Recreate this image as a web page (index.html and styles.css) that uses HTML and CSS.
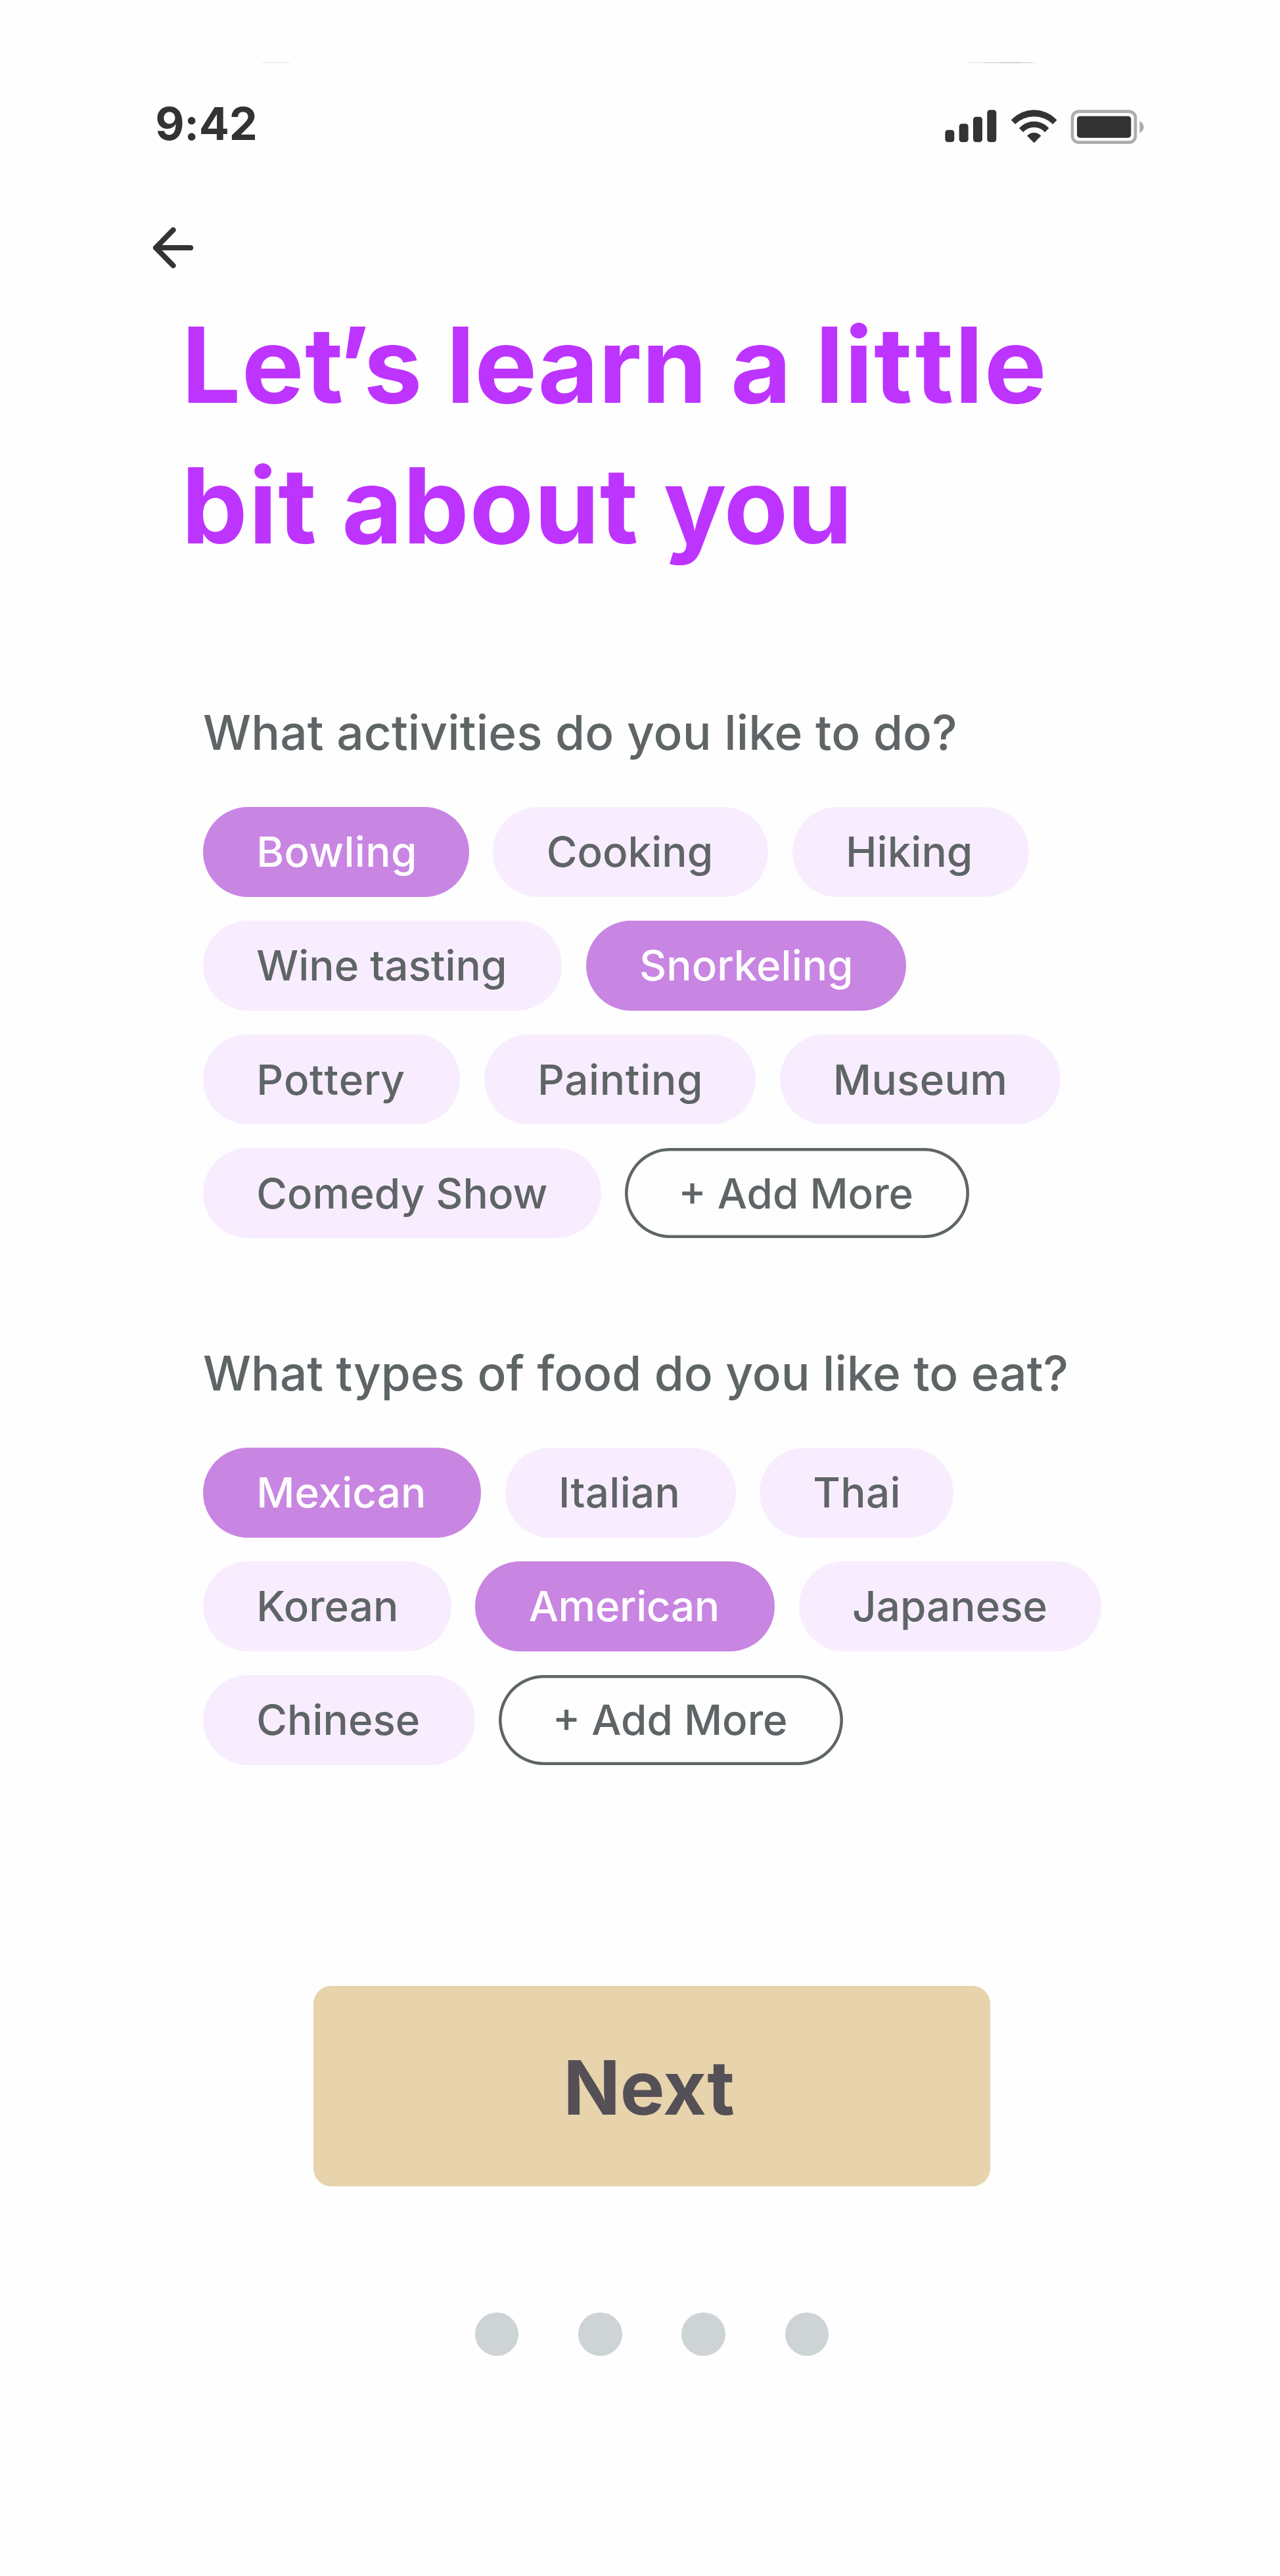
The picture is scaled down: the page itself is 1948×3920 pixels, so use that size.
FILE: index.html
```html
<!DOCTYPE html>
<html lang="en">
<head>
<meta charset="utf-8">
<title>Let’s learn a little bit about you</title>
<link rel="stylesheet" href="styles.css">
</head>
<body>
<main class="screen">
  <div class="top-edge">
    <span class="edge-left"></span>
    <span class="edge-right"></span>
  </div>

  <header class="status-bar">
    <span class="time">9:42</span>
    <svg class="status-icons" viewBox="0 0 912 162" aria-hidden="true">
      <g fill="#333">
        <rect x="4" y="95" width="42" height="56" rx="13"/>
        <rect x="68" y="67" width="42" height="84" rx="13"/>
        <rect x="132" y="35" width="42" height="116" rx="13"/>
        <rect x="196" y="4" width="42" height="147" rx="13"/>
        <g stroke="#333" stroke-width="3" stroke-linejoin="round">
          <path d="M307 50A141 141 0 0 1 513 50L496 67.500A123 123 0 0 0 324 67.500Z"/>
          <path d="M343.500 87A90 90 0 0 1 476.500 87L459.500 104A66 66 0 0 0 360.500 104Z"/>
          <path d="M379.500 122A42 42 0 0 1 440.500 122L410 153Z"/>
        </g>
        <rect x="606" y="32" width="247" height="99" rx="14"/>
      </g>
      <rect x="585" y="11" width="288" height="141" rx="29" fill="none" stroke="#adadad" stroke-width="14"/>
      <path d="M892 55Q911 64 911 82Q911 100 892 109Z" fill="#adadad"/>
    </svg>
  </header>

  <button class="back" aria-label="Back">
    <svg viewBox="0 0 64 64" aria-hidden="true">
      <path d="M60 32H7M33.500 5L7 32L33.500 59" fill="none" stroke="#333" stroke-width="8.200" stroke-linecap="round" stroke-linejoin="round"/>
    </svg>
  </button>

  <h1 class="title">
    <span class="line"><span class="w-lets">Le<span class="t-quote">t</span>’s</span> <span class="w-learn">learn</span> <span class="w-a">a</span> <span class="w-little">li<span class="t-pair">t</span>tle</span></span>
    <span class="line"><span class="w-bit">bit</span> <span class="w-about">about</span> <span class="w-you">you</span></span>
  </h1>

  <section class="question">
    <h2 class="airy">What activities do you like to do?</h2>
    <div class="chips">
      <button class="chip selected loose" style="width:405px">Bowling</button>
      <button class="chip" style="width:419px">Cooking</button>
      <button class="chip" style="width:359.8px">Hiking</button>
      <button class="chip" style="width:546.4px">Wine tasting</button>
      <button class="chip selected" style="width:487px">Snorkeling</button>
      <button class="chip looser unkerned" style="width:391.2px">Pottery</button>
      <button class="chip looser" style="width:413.6px">Painting</button>
      <button class="chip loose" style="width:427.7px">Museum</button>
      <button class="chip" style="width:605.5px">Comedy Show</button>
      <button class="chip add" style="width:524px">+ Add More</button>
    </div>
  </section>

  <section class="question">
    <h2>What types of food do you like to eat?</h2>
    <div class="chips">
      <button class="chip selected" style="width:423.2px">Mexican</button>
      <button class="chip loose" style="width:351px">Italian</button>
      <button class="chip loose" style="width:295.5px">Thai</button>
      <button class="chip" style="width:378px">Korean</button>
      <button class="chip selected tight" style="width:456px">American</button>
      <button class="chip" style="width:460px">Japanese</button>
      <button class="chip" style="width:414px">Chinese</button>
      <button class="chip add" style="width:523.6px">+ Add More</button>
    </div>
  </section>

  <button class="next">Next</button>

  <div class="dots"><i></i><i></i><i></i><i></i></div>
</main>
</body>
</html>
```
FILE: styles.css
```css
* {
  box-sizing: border-box;
}

body {
  margin: 0;
  background: #fefefe;
  font-family: Inter, "Liberation Sans", sans-serif;
}

button {
  margin: 0;
  padding: 0;
  border: 0;
  background: none;
  font-family: inherit;
}

.screen {
  display: flex;
  flex-direction: column;
  align-items: flex-start;
  width: 1948px;
  height: 3920px;
  padding-top: 95px;
  overflow: hidden;
}

/* Hairlines along the top edge of the screen */
.top-edge {
  display: flex;
  justify-content: space-between;
  width: 100%;
  height: 1px;
  padding: 0 370px 0 399px;
}

.edge-left {
  width: 42px;
  background: #e6e6e6;
}

.edge-right {
  width: 104px;
  background: linear-gradient(90deg, #e4e4e4 23px, #c8c8c8 23px 47px, #b2b2b2 47px 81px, #cacaca 81px 96px, #e8e8e8 96px);
}

.status-bar {
  display: flex;
  justify-content: space-between;
  align-items: flex-start;
  width: 100%;
  height: 82px;
  margin-top: 51px;
  padding: 0 207px 0 236.300px;
}

.time {
  color: #333;
  font-size: 68.3px;
  font-weight: 700;
  line-height: 82px;
  letter-spacing: -0.3px;
}

.status-icons {
  width: 304px;
  height: 54px;
  margin-top: 19px;
}

.back {
  width: 64px;
  height: 64px;
  margin: 115.500px 0 0 230px;
}

.back svg {
  display: block;
  width: 64px;
  height: 64px;
}

.title {
  margin: 39.500px 0 0 276.300px;
  color: #be34ff;
  font-size: 159.5px;
  font-weight: 700;
  line-height: 214.4px;
}

/* Each word carries its own tracking */
.line {
  display: flex;
  white-space: nowrap;
}

.w-lets {
  letter-spacing: 1.2px;
}

.t-quote {
  letter-spacing: -8.8px;
}

.w-learn {
  margin-left: 35.500px;
  letter-spacing: -0.3px;
}

.w-a {
  margin-left: 36.300px;
}

.w-little {
  margin-left: 36.100px;
  letter-spacing: 1.5px;
}

.t-pair {
  letter-spacing: 4.2px;
}

.w-bit {
  letter-spacing: 1.6px;
}

.w-about {
  margin-left: 36.900px;
  letter-spacing: 0.6px;
}

.w-you {
  margin-left: 38px;
  letter-spacing: -1.4px;
}

.question {
  width: 1400px;
  margin: 194.400px 0 0 309px;
}

.question + .question {
  margin-top: 162.200px;
}

.question h2 {
  margin: 0 0 68.800px;
  color: #5f6566;
  font-size: 72.9px;
  font-weight: 500;
  line-height: 88px;
  white-space: nowrap;
}

.question h2.airy {
  letter-spacing: 0.12px;
}

.chips {
  display: flex;
  flex-wrap: wrap;
  gap: 36.400px;
}

.chip {
  height: 136.700px;
  padding: 0 0 1px 81.300px;
  border-radius: 69px;
  background: #f8edfe;
  color: #5f6566;
  font-size: 63.8px;
  font-weight: 500;
  line-height: 135px;
  text-align: left;
  white-space: nowrap;
}

.chip.selected {
  background: #c985e2;
  color: #fefefe;
}

.chip.add {
  background: none;
  box-shadow: inset 0 0 0 4.6px #5f6566;
}

.tight {
  letter-spacing: -0.35px;
}

.loose {
  letter-spacing: 0.3px;
}

.looser {
  letter-spacing: 0.65px;
}

.unkerned {
  font-kerning: none;
}

.next {
  width: 1030px;
  height: 305.300px;
  margin: 336px 0 0 477px;
  padding: 4px 9px 0 0;
  border-radius: 27.300px;
  background: #e7d3ac;
  color: #545056;
  font-size: 113.9px;
  font-weight: 700;
  letter-spacing: -0.3px;
}

.dots {
  display: flex;
  gap: 90.500px;
  margin: 191.500px 0 0 722.700px;
}

.dots i {
  width: 66.800px;
  height: 66.800px;
  border-radius: 50%;
  background: #ced4d6;
}
```
